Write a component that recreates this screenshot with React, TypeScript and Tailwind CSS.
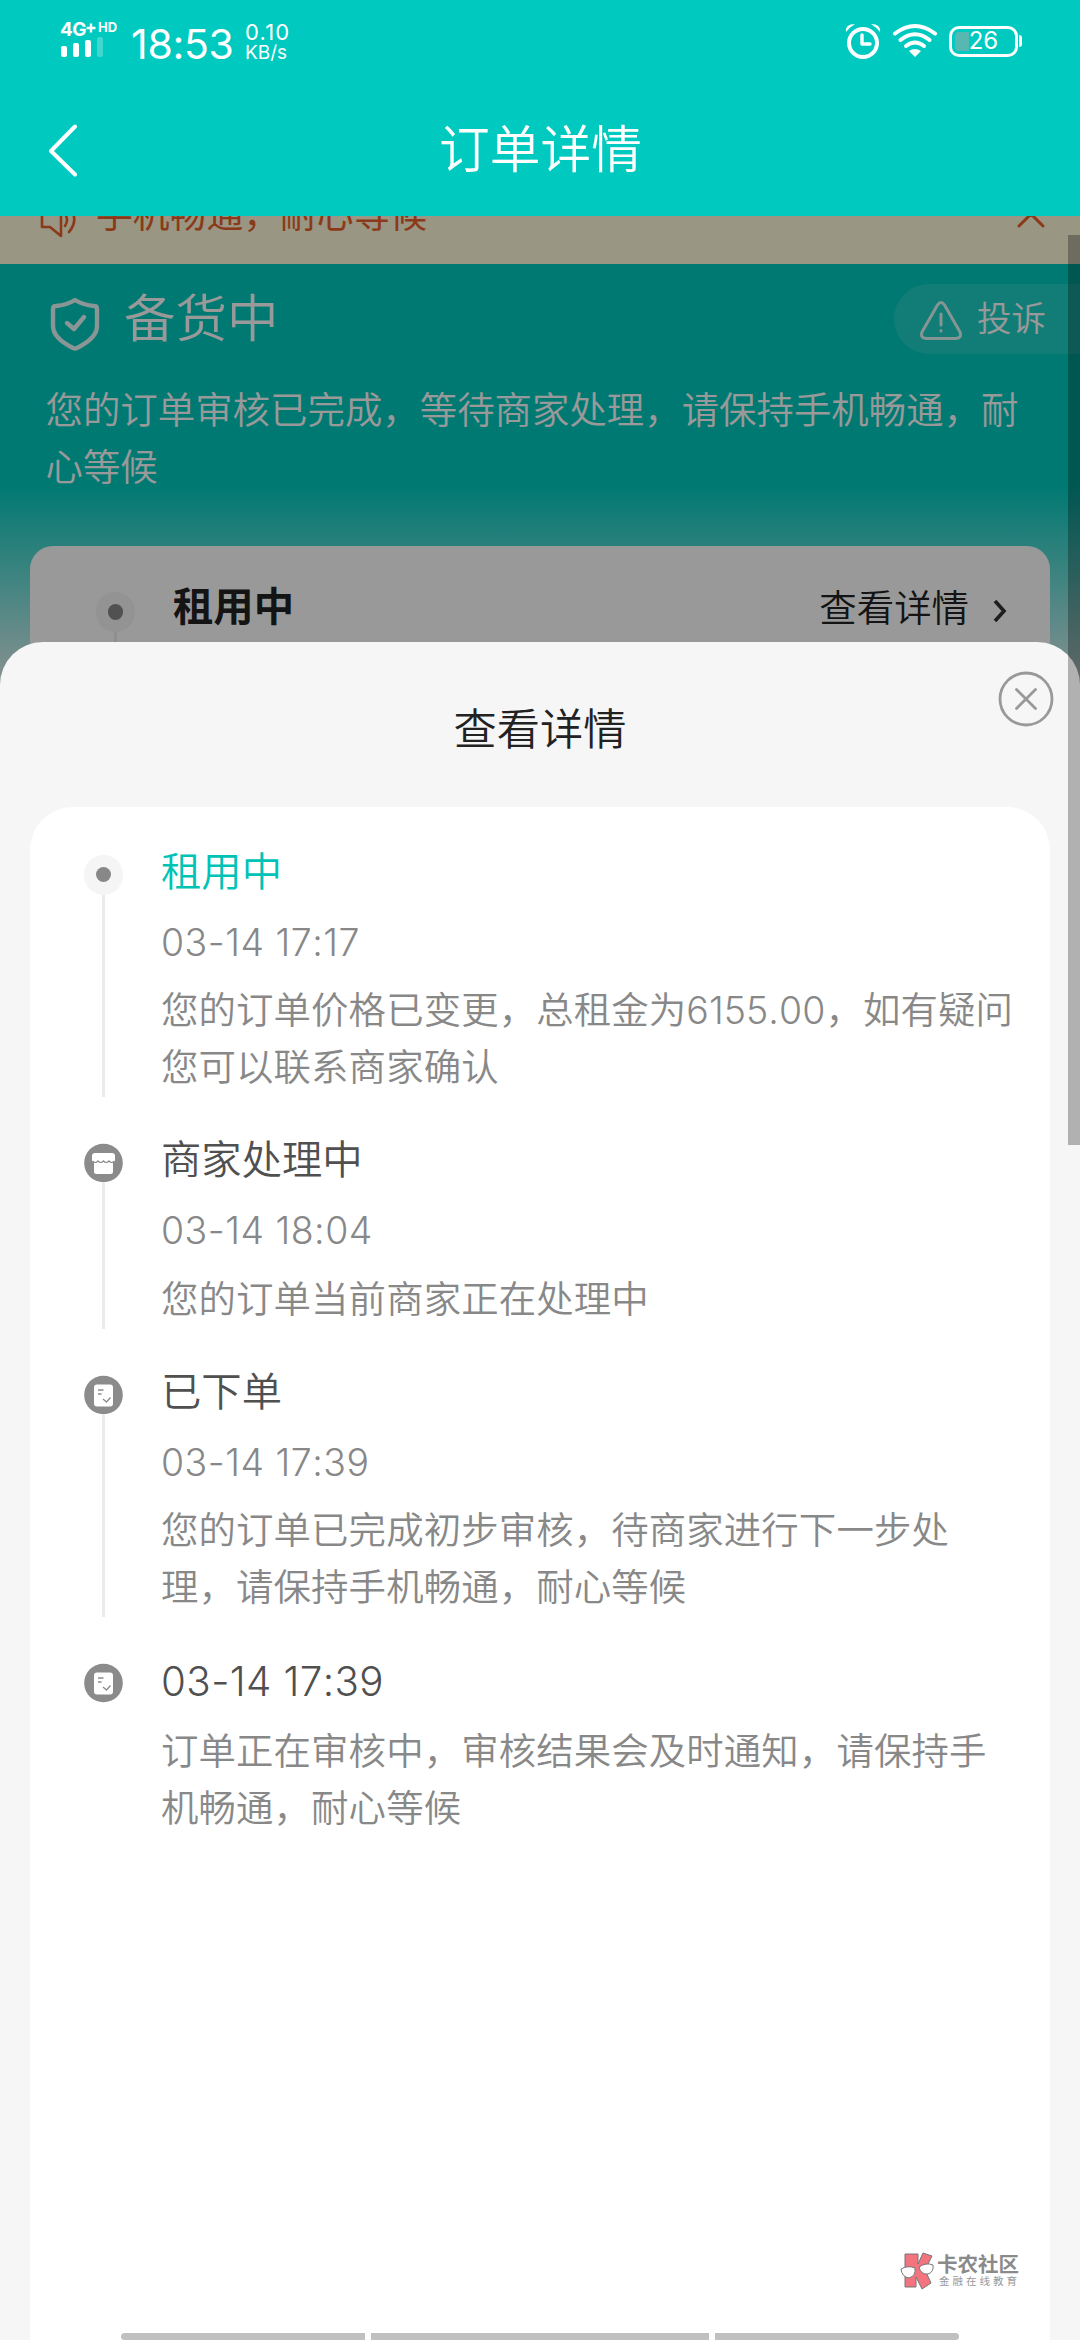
import { ReactNode } from 'react';

interface TimelineItem {
  id: number;
  icon: 'dot' | 'shop' | 'order';
  title: string;
  time?: string;
  desc: string[];
  active?: boolean;
}

const timeline: TimelineItem[] = [
  {
    id: 1,
    icon: 'dot',
    title: '租用中',
    time: '03-14 17:17',
    desc: ['您的订单价格已变更，总租金为6155.00，如有疑问', '您可以联系商家确认'],
    active: true,
  },
  {
    id: 2,
    icon: 'shop',
    title: '商家处理中',
    time: '03-14 18:04',
    desc: ['您的订单当前商家正在处理中'],
  },
  {
    id: 3,
    icon: 'order',
    title: '已下单',
    time: '03-14 17:39',
    desc: ['您的订单已完成初步审核，待商家进行下一步处', '理，请保持手机畅通，耐心等候'],
  },
  {
    id: 4,
    icon: 'order',
    title: '03-14 17:39',
    desc: ['订单正在审核中，审核结果会及时通知，请保持手', '机畅通，耐心等候'],
  },
];

function StatusBar() {
  return (
    <div className="flex h-[84px] items-start pl-[60px] pr-[58px] pt-[22px] font-['Inter','Noto_Sans_CJK_SC',sans-serif]">
      <div className="w-[60px]">
        <div className="flex h-[15px] items-start font-bold leading-none">
          <span className="-mt-[1px] text-[19px] leading-[18px] tracking-[-0.5px]">4G</span>
          <svg className="mt-[1px]" width="10" height="10" viewBox="0 0 10 10" stroke="white" strokeWidth="2.4">
            <path d="M5 0.5v9M0.5 5h9" />
          </svg>
          <span className="ml-[2px] text-[13px] leading-[11px]">HD</span>
        </div>
        <div className="flex h-[20px] items-end gap-[6px] pl-[1px]">
          <i className="h-[11px] w-[6px] rounded-[2px] bg-white" />
          <i className="h-[14px] w-[6px] rounded-[2px] bg-white" />
          <i className="h-[17px] w-[6px] rounded-[2px] bg-white" />
          <i className="h-[20px] w-[6px] rounded-[2px] bg-white/25" />
        </div>
      </div>
      <div className="ml-[11px] mt-[2px] w-[104px] text-[41px] leading-[40px] tracking-[-0.3px]">18:53</div>
      <div className="ml-[10px] leading-[20px]">
        <div className="text-[22px] tracking-[1.2px]">0.10</div>
        <div className="mt-[1px] text-[19px]">KB/s</div>
      </div>
      <div className="ml-auto flex items-center gap-[11px] pt-[1px]">
        <svg width="36" height="36" viewBox="0 0 36 36" fill="none" stroke="white">
          <circle cx="18" cy="20" r="14" strokeWidth="4" />
          <path d="M17 12v9h8" strokeWidth="3.4" strokeLinejoin="round" strokeLinecap="round" />
          <path d="M1 9q-1-8 9-8q-5 3-9 8zM35 9q1-8-9-8q5 3 9 8z" fill="white" stroke="none" />
        </svg>
        <svg width="46" height="36" viewBox="0 0 46 36" fill="none" stroke="white" strokeWidth="4" strokeLinecap="round">
          <path d="M3 10.500q20-15 40 0" />
          <path d="M8.500 17q14.500-11.500 29 0" />
          <path d="M14 23q9-7 18 0" />
          <path d="M17 28q6-4 12 0l-6 6z" fill="white" stroke="none" />
        </svg>
        <div className="flex items-center">
          <div className="relative flex h-[31px] w-[69px] items-center justify-center rounded-[10px] border-[3px] border-white">
            <i className="absolute left-[3px] top-[3px] h-[19px] w-[14px] rounded-l-[4px] bg-[#56b8b1]" />
            <span className="relative text-[24px] leading-none">26</span>
          </div>
          <i className="ml-[1px] h-[12px] w-[3px] rounded-r-full bg-white" />
        </div>
      </div>
    </div>
  );
}

function Header() {
  return (
    <div className="h-[216px] bg-[#00cabf] text-white">
      <StatusBar />
      <div className="flex h-[132px] items-center">
        <svg className="ml-[47px]" width="32" height="54" viewBox="0 0 32 54" fill="none" stroke="white" strokeWidth="4" strokeLinecap="round" strokeLinejoin="round">
          <path d="M28 3.500L4 28l24 23.500" />
        </svg>
        <div className="flex-1 pr-[78px] text-center text-[50.7px] font-[350] leading-[60px]">订单详情</div>
      </div>
    </div>
  );
}

function Notice() {
  return (
    <div className="h-[48px] overflow-hidden bg-[#fffada] text-[#e8622a]">
      <div className="-mt-[30px] flex h-[57px] items-center pl-[40px] pr-[34px]">
        <svg className="mt-[10px]" width="38" height="38" viewBox="0 0 38 38" fill="none" stroke="currentColor" strokeWidth="2.6" strokeLinejoin="round" strokeLinecap="round">
          <path d="M2 12h8l11-9v32l-11-9h-8z" />
          <path d="M25 13q4 6 0 12M30 7q9 12-1 24" />
        </svg>
        <span className="ml-[18px] text-[36.8px]">手机畅通，耐心等候</span>
        <svg className="ml-auto mt-[10px]" width="30" height="18" viewBox="0 0 30 18" fill="none" stroke="currentColor" strokeWidth="3" strokeLinecap="round">
          <path d="M3 15L15 3l12 12" />
        </svg>
      </div>
    </div>
  );
}

function StatusPanel() {
  return (
    <div className="h-[436px] bg-linear-to-b/srgb from-[#00cabf] from-[221px] to-[#f5f5f5] to-[436px] text-white">
      <div className="flex h-[110px] items-start pt-[20px]">
        <svg className="ml-[50px] mt-[13px]" width="50" height="55" viewBox="0 0 50 55" fill="none" stroke="white" strokeWidth="4.4" strokeLinecap="round" strokeLinejoin="round" opacity="0.9">
          <path d="M25 3q8 5 19 6q3 0 3 3v17q0 12-20 22q-2 1-4 0q-20-10-20-22V12q0-3 3-3q11-1 19-6z" />
          <path d="M17 26l7 6 10-12" />
        </svg>
        <div className="ml-[24px] text-[51.5px] font-[350] leading-[69px]">备货中</div>
        <div className="ml-auto flex h-[70px] w-[186px] items-center rounded-l-full bg-white/12">
          <svg className="ml-[25px] mt-[3px]" width="44" height="40" viewBox="0 0 44 40" fill="none" stroke="white" strokeWidth="3" strokeLinecap="round" strokeLinejoin="round" opacity="0.85">
            <path d="M18.500 4q3.500-5 7 0l15.500 27q2 6-4 6.500H7q-6-.5-4-6.500z" />
            <path d="M22 13v11M22 29.500v.5" />
          </svg>
          <span className="ml-[14px] text-[34.5px] font-[350] leading-[66px]">投诉</span>
        </div>
      </div>
      <div className="ml-[45.5px] mt-[8px] whitespace-nowrap text-[37.44px] font-[350] leading-[57px]">
        <p>您的订单审核已完成，等待商家处理，请保持手机畅通，耐</p>
        <p>心等候</p>
      </div>
      <div className="mx-[30px] mt-[50px] flex h-[104px] items-start rounded-t-[23px] bg-white text-[#222]">
        <div className="ml-[66px] mt-[46px] flex flex-col items-center">
          <Dot />
          <i className="h-[18px] w-[3px] bg-[#eee]" />
        </div>
        <b className="ml-[38px] mt-[32px] text-[40.32px] leading-[57px]">租用中</b>
        <span className="ml-auto mt-[34px] text-[37.44px] font-[350] leading-[57px]">查看详情</span>
        <svg className="ml-[23px] mr-[42px] mt-[53px]" width="16" height="24" viewBox="0 0 16 24" fill="none" stroke="#333" strokeWidth="3.6">
          <path d="M3 2l9 10-9 10" />
        </svg>
      </div>
    </div>
  );
}

function Dot() {
  return (
    <div className="flex h-[40px] w-[39px] items-center justify-center rounded-full bg-[#f5f5f5]">
      <i className="size-[15.5px] rounded-full bg-[#888]" />
    </div>
  );
}

function RoundIcon({ children }: { children: ReactNode }) {
  return (
    <svg className="shrink-0" width="39" height="40" viewBox="0 0 39 40">
      <circle cx="19.500" cy="20" r="19.300" fill="#8b8b8b" />
      {children}
    </svg>
  );
}

function ShopIcon() {
  return (
    <RoundIcon>
      <path d="M11 10h17q3 0 3 3v5.500H8V13q0-3 3-3z" fill="white" />
      <path d="M10 17h19v11.500q0 2.500-2.500 2.500h-14q-2.500 0-2.500-2.500z" fill="white" />
      <path d="M8.500 18q3 3 5.500 0q2.700 3 5.500 0q2.700 3 5.500 0q2.700 3 5.500 0" fill="none" stroke="#8b8b8b" strokeWidth="1.200" />
    </RoundIcon>
  );
}

function OrderIcon() {
  return (
    <RoundIcon>
      <rect x="10" y="9.500" width="19" height="22" rx="3" fill="white" />
      <path d="M14 15h5.500M14 19h3.500" stroke="#8b8b8b" strokeWidth="1.500" />
      <path d="M19 24l3.500 3 4-4.500" fill="none" stroke="#8b8b8b" strokeWidth="1.300" />
    </RoundIcon>
  );
}

function TimelineRow({ item, last }: { item: TimelineItem; last: boolean }) {
  return (
    <div className="flex">
      <div className="flex w-[39px] flex-col items-center pt-[12px]">
        {item.icon === 'dot' && <Dot />}
        {item.icon === 'shop' && <ShopIcon />}
        {item.icon === 'order' && <OrderIcon />}
        {!last && <i className="mb-[34px] w-[3px] flex-1 bg-[#ebebeb]" />}
      </div>
      <div className="ml-[38px] whitespace-nowrap pb-[35px] text-[37.44px] font-[350] leading-[57px] text-[#888] [font-kerning:none]">
        <h3 className={`text-[40.32px] ${item.active ? 'text-[#00c2b5]' : 'text-[#505050]'} ${item.time ? '' : 'pt-[2px] tracking-[0.4px]'}`}>
          {item.title}
        </h3>
        {item.time && <div className="mt-[14px] font-light tracking-[0.5px]">{item.time}</div>}
        <div className={`${item.time ? 'mt-[11.5px]' : 'mt-[12.5px]'} tracking-[0.1px]`}>
          {item.desc.map((line, index) => (
            <p key={index}>{line}</p>
          ))}
        </div>
      </div>
    </div>
  );
}

function DetailSheet() {
  return (
    <div className="absolute inset-x-0 bottom-0 top-[642px] flex flex-col rounded-t-[43px] bg-[#f6f6f6]">
      <div className="relative flex h-[165px] items-center justify-center">
        <h2 className="mt-[8px] text-[43.2px] font-[350] leading-[60px] text-[#222]">查看详情</h2>
        <svg className="absolute right-[26px] top-[29px]" width="56" height="56" viewBox="0 0 56 56" fill="none" stroke="#999" strokeWidth="2.8" strokeLinecap="round">
          <circle cx="28" cy="28" r="26" />
          <path d="M18.500 18.500l19 19M37.500 18.500l-19 19" />
        </svg>
      </div>
      <div className="mx-[30px] flex-1 rounded-t-[43px] bg-white pl-[54px] pt-[35.5px]">
        {timeline.map((item, index) => (
          <TimelineRow key={item.id} item={item} last={index === timeline.length - 1} />
        ))}
      </div>
    </div>
  );
}

function Watermark() {
  return (
    <div className="absolute left-[900px] top-[2252px] flex items-start">
      <svg width="35" height="38" viewBox="0 0 35 38" stroke="#777" strokeWidth="1" strokeLinejoin="round">
        <path d="M5 2h13v10l5-11 9 3-7 14 6 13-9 6-6-12v10H5z" fill="#f3747f" />
        <path d="M1 17q7-4 14-1q1 8-6 10q-7-1-8-9zM19 15q7-5 14-2q1 7-5 9q-7 1-9-7z" fill="white" />
      </svg>
      <div className="ml-[2px] mt-[2px] whitespace-nowrap">
        <div className="text-[20.5px] font-bold leading-[21px] text-[#8a8a8a]">卡农社区</div>
        <div className="ml-[2px] text-[10.5px] leading-[14px] tracking-[3px] text-[#999]">金融在线教育</div>
      </div>
    </div>
  );
}

export default function App() {
  return (
    <div className="relative h-[2340px] w-[1080px] overflow-hidden bg-[#f5f5f5] font-['Inter','Noto_Sans_CJK_SC',sans-serif]" lang="zh-CN">
      <Header />
      <Notice />
      <StatusPanel />
      <div className="absolute inset-x-0 bottom-0 top-[216px] bg-black/40" />
      <DetailSheet />
      <Watermark />
      {/* page scrollbar */}
      <div className="absolute right-0 top-[235px] h-[910px] w-[12px] bg-black/28" />
      {/* gesture navigation hints */}
      <div className="absolute inset-x-[121px] bottom-0 flex h-[7px] gap-[6px]">
        <i className="w-[244px] rounded-l-[4px] bg-[#c0c0c0]" />
        <i className="flex-1 bg-[#c0c0c0]" />
        <i className="w-[244px] rounded-r-[4px] bg-[#c0c0c0]" />
      </div>
    </div>
  );
}
